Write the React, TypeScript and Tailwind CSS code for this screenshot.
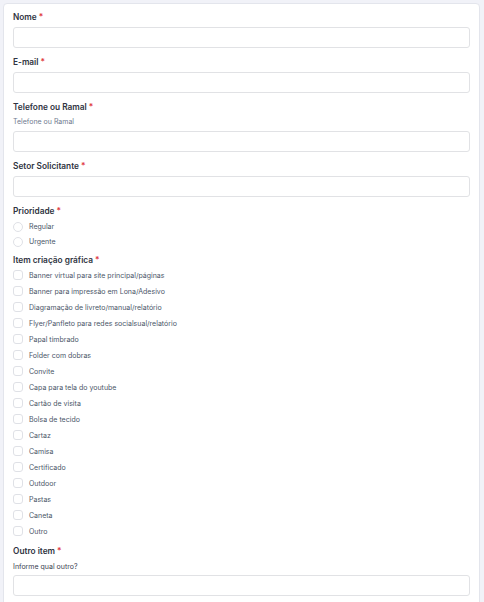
import React from "react";

const itensGraficos = [
  "Banner virtual para site principal/páginas",
  "Banner para impressão em Lona/Adesivo",
  "Diagramação de livreto/manual/relatório",
  "Flyer/Panfleto para redes socialsual/relatório",
  "Papal timbrado",
  "Folder com dobras",
  "Convite",
  "Capa para tela do youtube",
  "Cartão de visita",
  "Bolsa de tecido",
  "Cartaz",
  "Camisa",
  "Certificado",
  "Outdoor",
  "Pastas",
  "Caneta",
  "Outro",
];

function Label({ children }: { children: React.ReactNode }) {
  return (
    <div className="h-[12px] flex items-center text-[8.3px] font-semibold text-[#2f3441] leading-none">
      {children}
      <span className="ml-[2px] text-[#e0383e]">*</span>
    </div>
  );
}

function Field({ className = "" }: { className?: string }) {
  return (
    <input
      type="text"
      className={`block w-full h-[21px] rounded-[3px] border border-[#e1e2e5] bg-white outline-none ${className}`}
    />
  );
}

export default function App() {
  return (
    <div className="min-h-[602px] w-[484px] bg-[#f1f2f8] pt-[3px] pl-[3px]" style={{ fontFamily: "Inter, 'Noto Sans', sans-serif" }}>
      <div className="w-[477px] min-h-[620px] rounded-t-[4px] border border-[#e3e5ec] bg-white pl-[9px] pr-[9px] pt-[7px]">
        {/* Nome */}
        <Label>Nome</Label>
        <Field className="mt-[4px]" />

        {/* E-mail */}
        <div className="mt-[8px]">
          <Label>E-mail</Label>
        </div>
        <Field className="mt-[4px]" />

        {/* Telefone */}
        <div className="mt-[8px]">
          <Label>Telefone ou Ramal</Label>
        </div>
        <div className="mt-[3px] h-[10px] flex items-center text-[7px] text-[#6f7a8f] leading-none">Telefone ou Ramal</div>
        <Field className="mt-[5px]" />

        {/* Setor */}
        <div className="mt-[8px]">
          <Label>Setor Solicitante</Label>
        </div>
        <Field className="mt-[4px]" />

        {/* Prioridade */}
        <div className="mt-[8px]">
          <Label>Prioridade</Label>
        </div>
        <div className="mt-[2px]">
          {["Regular", "Urgente"].map((op) => (
            <label key={op} className="h-[15px] flex items-center gap-[6px] text-[7px] text-[#4a5568] leading-none">
              <span className="w-[10px] h-[10px] rounded-full border border-[#dfe1e6] bg-white" />
              {op}
            </label>
          ))}
        </div>

        {/* Item criação gráfica */}
        <div className="mt-[5px]">
          <Label>Item criação gráfica</Label>
        </div>
        <div className="mt-[1px]">
          {itensGraficos.map((item) => (
            <label key={item} className="h-[16px] flex items-center gap-[6px] text-[7px] text-[#4a5568] leading-none">
              <span className="w-[10px] h-[10px] rounded-[3px] border border-[#dfe1e6] bg-white" />
              {item}
            </label>
          ))}
        </div>

        {/* Outro item */}
        <div className="mt-[6px]">
          <Label>Outro item</Label>
        </div>
        <div className="mt-[4px] h-[10px] flex items-center text-[7px] text-[#3a4150] leading-none">Informe qual outro?</div>
        <Field className="mt-[4px]" />
      </div>
    </div>
  );
}
